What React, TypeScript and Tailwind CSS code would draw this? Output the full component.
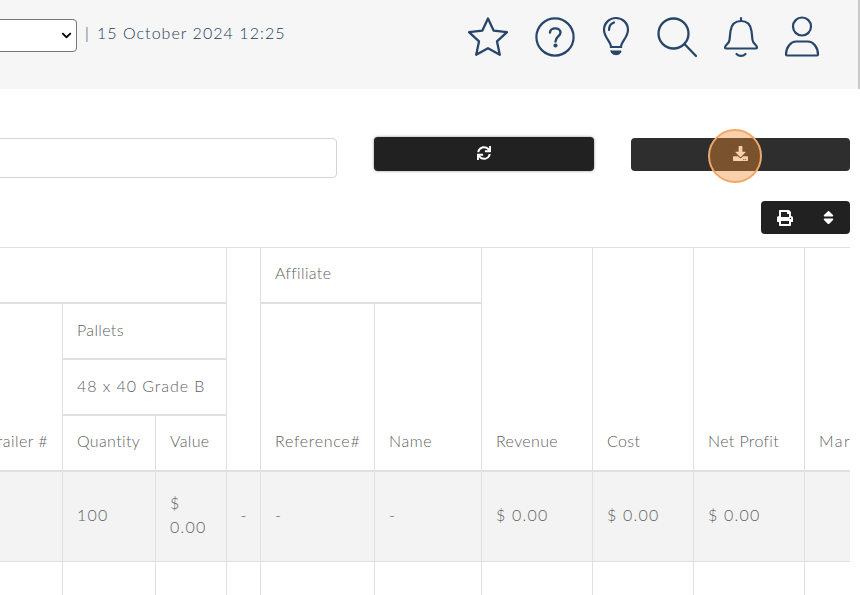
import { FaChevronDown, FaDownload, FaPrint, FaSort, FaSync } from 'react-icons/fa'

const navy = '#27466a'

function HeaderIcons() {
  return (
    <div className="flex items-center" style={{ color: navy }}>
      <svg width="42" height="42" viewBox="0 0 42 42" fill="none" stroke="currentColor" strokeWidth="2.3" strokeLinejoin="round">
        <path d="M21 2.5 L26.6 14.6 L40 16.2 L30 25.4 L32.8 38.8 L21 32.2 L9.2 38.8 L12 25.4 L2 16.2 L15.4 14.6 Z" />
      </svg>
      <svg width="40" height="40" viewBox="0 0 40 40" fill="none" stroke="currentColor" strokeWidth="2.2" strokeLinecap="round" className="ml-[26px]">
        <circle cx="20" cy="20" r="18.6" />
        <path d="M15 15.5 C15 10 25.5 10 25.5 15.5 C25.5 19.5 20.5 19.5 20.5 24.5" strokeWidth="2.4" />
        <circle cx="20.5" cy="28.5" r="1" fill="currentColor" />
      </svg>
      <svg width="30" height="42" viewBox="0 0 30 42" fill="none" stroke="currentColor" strokeWidth="2.2" strokeLinecap="round" className="ml-[26px]">
        <path d="M10 31 C10 26 3 21 3 14 C3 7 8.5 2 15 2 C21.5 2 27 7 27 14 C27 21 20 26 20 31 Z" />
        <path d="M8 14 C8 10 10 7.5 13 6.5" />
        <path d="M10 35 H20 C20 40 10 40 10 35 Z" fill="currentColor" strokeWidth="1" />
      </svg>
      <svg width="40" height="42" viewBox="0 0 40 42" fill="none" stroke="currentColor" strokeWidth="2.3" strokeLinecap="round" className="ml-[26px]">
        <circle cx="16.5" cy="17.5" r="15" />
        <path d="M27.5 28 L39 40" />
      </svg>
      <svg width="36" height="42" viewBox="0 0 36 42" fill="none" stroke="currentColor" strokeWidth="2.2" strokeLinecap="round" strokeLinejoin="round" className="ml-[26px]">
        <path d="M18 2 V5" />
        <path d="M2 31.5 C2 29 6 28 6.5 24 L7.5 15 C8.5 8 13 5 18 5 C23 5 27.5 8 28.5 15 L29.5 24 C30 28 34 29 34 31.5 C34 32 33.5 32.5 33 32.5 H3 C2.5 32.5 2 32 2 31.5 Z" />
        <path d="M13.5 38 C16 40.5 20 40.5 22.5 38" />
      </svg>
      <svg width="36" height="42" viewBox="0 0 36 42" fill="none" stroke="currentColor" strokeWidth="2.2" strokeLinejoin="round" className="ml-[25px]">
        <circle cx="18" cy="10.5" r="9" />
        <path d="M2 38.5 C2 31 7 25.5 12 25.5 H24 C29 25.5 34 31 34 38.5 C34 39.5 33.5 39.5 33 39.5 H3 C2.5 39.5 2 39.5 2 38.5 Z" />
      </svg>
    </div>
  )
}

const cell = 'border border-[#e0e0e0] px-[14px] align-middle font-light text-left tracking-[0.35px]'
const head = `${cell} border-b-2 !align-bottom pb-[17px]`
const group = `${cell} border-b-2 pb-[2px]`
const data = `${cell} pb-[2px]`
const num = '!tracking-[1.2px]'

export default function App() {
  return (
    <div className="h-[595px] w-[860px] overflow-hidden bg-white text-[16px] text-[#5f5f5f]" style={{ fontFamily: 'Lato, sans-serif' }}>
      <header className="flex h-[89px] items-start border-r-2 border-[#c9c9c9] bg-[#f6f6f6] pr-[38px]">
        <div className="relative ml-[-43px] mt-[19px]">
          <select className="block h-[33px] w-[120px] appearance-none rounded-[4px] border border-[#767676] bg-white" />
          <FaChevronDown size={11} className="absolute right-[5px] top-[11px] text-black" />
        </div>
        <span className="ml-[8px] mt-[21px] font-light tracking-[1.05px] text-[#1c3a5c]">
          <span className="mr-[7px]">|</span>15 October 2024 12:25
        </span>
        <div className="ml-auto mt-[16px]">
          <HeaderIcons />
        </div>
      </header>

      <div className="w-[850px]">
        <div className="mt-[48px] flex items-start">
          <input className="ml-[-43px] mt-[1px] h-[40px] w-[380px] rounded-[4px] border border-[#d4d4d4] bg-white" />
          <button className="ml-[37px] flex h-[34px] w-[220px] items-center justify-center rounded-[4px] bg-[#212121] text-white shadow-[0_0_3px_#8a8a8a]">
            <FaSync size={14} className="mb-[3px]" />
          </button>
          <div className="relative ml-[37px] mt-[1px]">
            <button className="flex h-[33px] w-[219px] items-center justify-center rounded-[4px] bg-[#2e2e2e] text-white">
              <FaDownload size={15} className="mb-[2px]" />
            </button>
            <div className="absolute left-[77px] top-[-9px] h-[54px] w-[54px] rounded-full border-2 border-[#f0a868] bg-[#f08a30]/40" />
          </div>
        </div>

        <div className="mt-[23px] flex justify-end">
          <div className="flex h-[33px] w-[89px] items-center rounded-[4px] bg-[#212121] pl-[16px] text-white">
            <FaPrint size={16} />
            <FaSort size={17} className="ml-[27px]" />
          </div>
        </div>

        <div className="mt-[13px] overflow-hidden">
          <table className="ml-[-38px] w-[938px] table-fixed border-collapse">
            <colgroup>
              <col className="w-[100px]" />
              <col className="w-[93px]" />
              <col className="w-[71px]" />
              <col className="w-[34px]" />
              <col className="w-[114px]" />
              <col className="w-[107px]" />
              <col className="w-[111px]" />
              <col className="w-[101px]" />
              <col className="w-[111px]" />
              <col className="w-[96px]" />
            </colgroup>
            <thead>
              <tr className="h-[55px]">
                <th colSpan={3} className={group} />
                <th rowSpan={4} className={head} />
                <th colSpan={2} className={`${group} !pb-[4px]`}>Affiliate</th>
                <th rowSpan={4} className={head}>Revenue</th>
                <th rowSpan={4} className={head}>Cost</th>
                <th rowSpan={4} className={head}>Net Profit</th>
                <th rowSpan={4} className={`${head} whitespace-nowrap !tracking-[1.5px]`}>Margin</th>
              </tr>
              <tr className="h-[56px]">
                <th rowSpan={3} className={`${head} whitespace-nowrap !text-right !tracking-[0.45px]`}>Trailer #</th>
                <th colSpan={2} className={group}>Pallets</th>
                <th rowSpan={3} className={`${head} !tracking-[0.7px]`}>Reference#</th>
                <th rowSpan={3} className={`${head} !tracking-[0.6px]`}>Name</th>
              </tr>
              <tr className="h-[56px]">
                <th colSpan={2} className={`${group} whitespace-nowrap !tracking-[0.95px]`}>48 x 40 Grade B</th>
              </tr>
              <tr className="h-[56px]">
                <th className={head}>Quantity</th>
                <th className={head}>Value</th>
              </tr>
            </thead>
            <tbody>
              <tr className="h-[91px] bg-[#f3f3f3]">
                <td className={data} />
                <td className={`${data} ${num}`}>100</td>
                <td className={`${data} ${num}`}>$ 0.00</td>
                <td className={`${data} !px-0 !text-center`}>-</td>
                <td className={data}>-</td>
                <td className={data}>-</td>
                <td className={`${data} ${num}`}>$ 0.00</td>
                <td className={`${data} ${num}`}>$ 0.00</td>
                <td className={`${data} ${num}`}>$ 0.00</td>
                <td className={data} />
              </tr>
              <tr className="h-[60px]">
                {Array.from({ length: 10 }).map((_, i) => (
                  <td key={i} className={cell} />
                ))}
              </tr>
            </tbody>
          </table>
        </div>
      </div>
    </div>
  )
}
